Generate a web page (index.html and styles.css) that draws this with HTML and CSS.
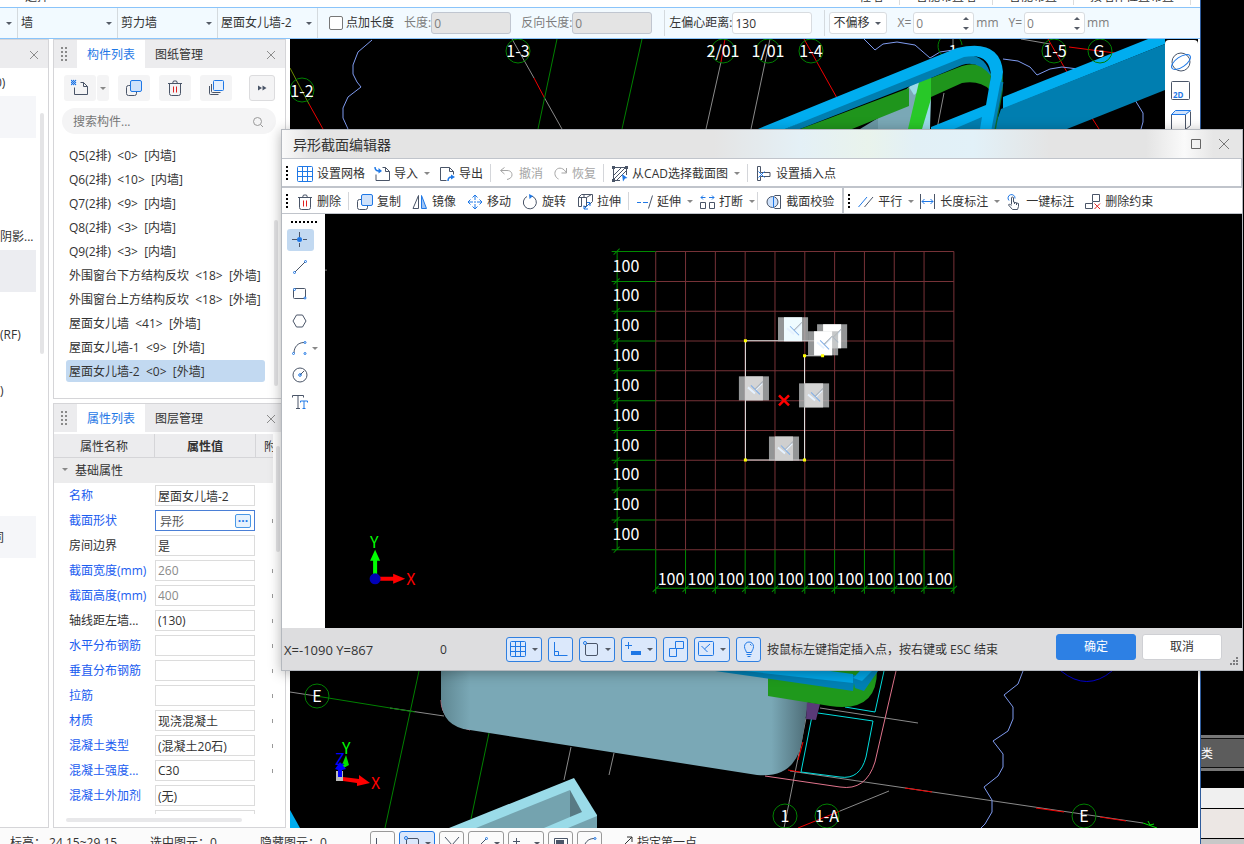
FILE: index.html
```html
<!DOCTYPE html>
<html lang="zh-CN">
<head>
<meta charset="utf-8">
<title>异形截面编辑器</title>
<meta name="viewport" content="width=device-width, initial-scale=1">
<link rel="stylesheet" href="styles.css">
</head>
<body>

<!-- icon sprite -->
<svg class="sprite" aria-hidden="true">
  <symbol id="i-close" viewBox="0 0 16 16"><path d="M4 4l8 8M12 4l-8 8" stroke="#8c8c8c"/></symbol>
  <symbol id="i-winclose" viewBox="0 0 16 16"><path d="M3 3l10 10M13 3L3 13" stroke="#777"/></symbol>
  <symbol id="i-winmax" viewBox="0 0 16 16"><path d="M3.500 3.500h9v9h-9z" stroke="#666"/></symbol>
  <symbol id="i-new" viewBox="0 0 18 18"><path d="M9.500 3.500h3l4 4v8h-13v-7M12.500 3.500v4h4" stroke="#4a5568"/><path d="M0 1h1v1h-1zM2 1h1v1h-1zM4 1h1v1h-1zM1 2h1v1h-1zM3 2h1v1h-1zM0 3h1v1h-1zM2 3h1v1h-1zM4 3h1v1h-1zM1 4h1v1h-1zM3 4h1v1h-1zM0 5h1v1h-1zM2 5h1v1h-1zM4 5h1v1h-1z" fill="#1f78e6" stroke="#1f78e6" stroke-width=".3"/></symbol>
  <symbol id="i-copy" viewBox="0 0 16 16"><path d="M4.500 5.500h-2a2 2 0 0 0-2 2v6a2 2 0 0 0 2 2h6a2 2 0 0 0 2-2v-1.500" stroke="#4a5568"/><rect x="4.500" y=".5" width="11" height="11" rx="1.500" fill="#cfe2fb" stroke="#1f78e6"/></symbol>
  <symbol id="i-trash" viewBox="0 0 16 16"><path d="M1 3.500h14M5.500 3.500l1-2.500h3l1 2.500M2.500 4v9.500a2 2 0 0 0 2 2h7a2 2 0 0 0 2-2v-9.500" stroke="#4a5568"/><path d="M6.500 6.500v6M9.500 6.500v6" stroke="#e02020"/></symbol>
  <symbol id="i-layers" viewBox="0 0 16 16"><path d="M3.500 4v7.500a1 1 0 0 0 1 1h8M1.500 6v7.500a1 1 0 0 0 1 1h8" stroke="#4a5568"/><rect x="5.500" y=".5" width="10" height="10" rx="1" fill="#e6f0fd" stroke="#1f78e6"/></symbol>
  <symbol id="i-more" viewBox="0 0 16 16"><path d="M4 5.500l4 2.500-4 2.500zM8.500 5.500l4 2.500-4 2.500z" fill="#4a5568"/></symbol>
  <symbol id="i-search" viewBox="0 0 16 16"><circle cx="7.500" cy="7.500" r="4" stroke="#999"/><path d="M10.500 10.500l2.500 2.500" stroke="#999"/></symbol>
  <symbol id="i-grid" viewBox="0 0 16 16"><rect x=".5" y=".5" width="15" height="15" rx="1" fill="none" stroke="#1f78e6"/><path d="M5.500 .5v15M10.500 .5v15M.5 5.500h15M.5 10.500h15" stroke="#1f78e6"/></symbol>
  <symbol id="i-import" viewBox="0 0 16 16"><path d="M8.500 1.500h3l4 4v9h-13.500v-6M11.500 1.500v4h4" stroke="#4a5568"/><path d="M1 1c0 3 1.500 4 4 4" stroke="#1f78e6" stroke-width="1.500"/><path d="M4.500 2l3.500 3-3.500 2.500z" fill="#1f78e6"/></symbol>
  <symbol id="i-export" viewBox="0 0 16 16"><path d="M7.500 14.500h-6v-13h9l4 4v3M10.500 1.500v4h4" stroke="#4a5568"/><path d="M9 15c0-3 1-4 3.500-4" stroke="#1f78e6" stroke-width="1.500"/><path d="M12 8.500l4 2.500-4 2.500z" fill="#1f78e6"/></symbol>
  <symbol id="i-undo" viewBox="0 0 16 16"><path d="M5.500 1.500L1.500 4.500l4 3.500M2 4.500h6c4 0 5 2.500 5 4.500s-2 4-5 4.500" stroke="#a5a5a5"/></symbol>
  <symbol id="i-redo" viewBox="0 0 16 16"><path d="M14.500 2v5h-5M14 6.500C12 2 7 1 4.500 3.500 1.500 6.500 3 11.500 6.500 13" stroke="#a5a5a5"/></symbol>
  <symbol id="i-hatch" viewBox="0 0 16 16"><path d="M1.500 13V2.500M3 1.500h10M14.500 3v6M3 14.500h5M2 9l7-7M2 13l11-11M5 14l9-9" stroke="#4a5568"/><path d="M0 0h3v3h-3zM13 0h3v3h-3zM0 13h3v3h-3z" fill="#4a5568"/><path d="M10 8l5.500 4-2.500.5-2 3z" fill="#1f78e6"/></symbol>
  <symbol id="i-insert" viewBox="0 0 16 16"><path d="M1.500 .5v14h3V10.500h9.500V6.500H4.500V.5z" stroke="#4a5568"/><path d="M2.500 5.500l6 6M8.500 5.500l-6 6" stroke="#1f78e6"/></symbol>
  <symbol id="i-mirror" viewBox="0 0 16 16"><path d="M6.500 1.500v13h-5.500z" stroke="#4a5568"/><path d="M9.500 1.500v13h5z" fill="#9ec5f7" stroke="#1f78e6"/></symbol>
  <symbol id="i-move" viewBox="0 0 16 16"><path d="M8 2v4M8 10v4M2 8h4M10 8h4M7 8h2" stroke="#1f78e6"/><path d="M5.500 3.500L8 1l2.500 2.500M5.500 12.500L8 15l2.500-2.500M3.500 5.500L1 8l2.500 2.500M12.500 5.500L15 8l-2.500 2.500" stroke="#1f78e6"/></symbol>
  <symbol id="i-rotate" viewBox="0 0 16 16"><path d="M10 2.200A6.500 6.500 0 1 1 5 2.500" stroke="#4a5568"/><path d="M7 0l4 2-3.500 3z" fill="#1f78e6"/></symbol>
  <symbol id="i-stretch" viewBox="0 0 16 16"><path d="M1.500 3.500h8v9h-3M1.500 3.500l3-3h11v7l-3 3M9.500 3.500l5-3M1.500 3.500v9h3v-9M7 1v3" stroke="#4a5568"/><path d="M7 15l6-6M7 11.500v3.500h4M13 12v-3.500h-3" stroke="#1f78e6"/></symbol>
  <symbol id="i-extend" viewBox="0 0 16 16"><path d="M0 8.500h4M6 8.500h5" stroke="#1f78e6"/><path d="M15.500 1.500l-4 13" stroke="#4a5568"/></symbol>
  <symbol id="i-break" viewBox="0 0 16 16"><path d="M1.500 8.500h5v6h-5zM10.500 8.500h5v6h-5z" stroke="#4a5568"/><path d="M2 3.500h4.500M4 1.500l-2 2 2 2M10 3.500h5M13 1.500l2 2-2 2" stroke="#1f78e6"/></symbol>
  <symbol id="i-check" viewBox="0 0 16 16"><path d="M8.500 1.500h6v13h-6" stroke="#4a5568"/><circle cx="6.500" cy="8" r="5.500" stroke="#4a5568" fill="#cfe2fb"/><path d="M7.500 2.500v11" stroke="#1f78e6"/></symbol>
  <symbol id="i-parallel" viewBox="0 0 16 16"><path d="M.5 13L9 3" stroke="#1f78e6"/><path d="M6.500 13L15 3" stroke="#4a5568"/></symbol>
  <symbol id="i-length" viewBox="0 0 16 16"><path d="M.5 0v15M14.500 0v15" stroke="#4a5568"/><path d="M2 7.500h11M4.500 5L2 7.500 4.500 10M10.500 5L13 7.500 10.500 10" stroke="#1f78e6"/></symbol>
  <symbol id="i-touch" viewBox="0 0 16 16"><path d="M3 6.500a3.500 3.500 0 1 1 6-2" stroke="#1f78e6"/><path d="M5.500 10.500V4a1 1 0 0 1 2 0v4l5 1.500v3l-1 3h-5l-4-4.500c0-1 1.500-1 3 .5M8.500 8v2M10.500 9v2" stroke="#4a5568"/></symbol>
  <symbol id="i-unlink" viewBox="0 0 16 16"><path d="M7.500 .5h7v7h-7zM7 9.500h-6.500v5h7V8" stroke="#4a5568"/><path d="M9.500 9.500l5.500 5.500M15 9.500L9.500 15" stroke="#e02020"/></symbol>
  <symbol id="i-point" viewBox="0 0 16 16"><path d="M7.500 0v5M7.500 11v4M0 7.500h5M11 7.500h4" stroke="#4a5568"/><circle cx="7.500" cy="7.500" r="2.500" fill="#1f78e6"/></symbol>
  <symbol id="i-line" viewBox="0 0 16 16"><path d="M3 13L13 3" stroke="#4a5568"/><circle cx="2.500" cy="13.500" r="1" stroke="#1f78e6"/><circle cx="13.500" cy="2.500" r="1" stroke="#1f78e6"/></symbol>
  <symbol id="i-rect" viewBox="0 0 16 16"><rect x="1.500" y="2.500" width="12" height="10" rx="1" stroke="#4a5568"/><circle cx="2.500" cy="3.500" r="1" stroke="#1f78e6" fill="#fff"/><circle cx="13" cy="12" r="1" stroke="#1f78e6" fill="#fff"/></symbol>
  <symbol id="i-hex" viewBox="0 0 16 16"><path d="M4.500 2h6l3.500 6-3.500 6h-6L1 8z" stroke="#4a5568"/></symbol>
  <symbol id="i-arc" viewBox="0 0 16 16"><path d="M2 13C2 7 6 2.500 12 2.500" stroke="#4a5568"/><circle cx="1.500" cy="13.500" r="1" stroke="#1f78e6"/><circle cx="13" cy="2.500" r="1" stroke="#1f78e6"/><circle cx="13" cy="13.500" r="1" stroke="#1f78e6"/></symbol>
  <symbol id="i-circle" viewBox="0 0 16 16"><circle cx="8" cy="8" r="7" stroke="#4a5568"/><path d="M8 8l4-4" stroke="#4a5568"/><circle cx="8" cy="8" r="1.300" stroke="#1f78e6"/></symbol>
  <symbol id="i-type" viewBox="0 0 16 16"><path d="M.5 3.500v-2h11v2M6 1.500v13M4 14.500h4" stroke="#4a5568"/><path d="M8.500 8.500v-1.500h7v1.500M12 7v7.500M10.500 14.500h3" stroke="#1f78e6"/></symbol>
  <symbol id="i-ortho" viewBox="0 0 16 16"><path d="M1.500 1v13.500h13M1.500 10.500h4v4" stroke="#1f78e6"/></symbol>
  <symbol id="i-ortho-off" viewBox="0 0 16 16"><path d="M1.500 2v12.500h13M1.500 10.500h4v4" stroke="#4a5568"/></symbol>
  <symbol id="i-snap" viewBox="0 0 16 16"><rect x="2.500" y="2.500" width="12" height="12" rx="1.500" stroke="#4a5568"/><circle cx="2" cy="2" r="1.500" stroke="#1f78e6" fill="#e0ebfc"/></symbol>
  <symbol id="i-dyn" viewBox="0 0 16 16"><path d="M3.500 1v7M0 4.500h7" stroke="#1f78e6"/><path d="M6 10h10v4h-10z" fill="#1f78e6"/></symbol>
  <symbol id="i-dyn-off" viewBox="0 0 16 16"><path d="M3.500 2v7M0 5.500h7" stroke="#4a5568"/><path d="M6 11h10v4h-10z" fill="#4a5568"/></symbol>
  <symbol id="i-link" viewBox="0 0 16 16"><path d="M7.500 .5h8v7h-8zM7.500 7.500h-6v8h7v-8" stroke="#1f78e6"/></symbol>
  <symbol id="i-constraint" viewBox="0 0 16 16"><rect x=".5" y=".5" width="15" height="14" rx="1" stroke="#1f78e6"/><path d="M3.500 5l6 6M6.500 8L12 3" stroke="#1f78e6"/></symbol>
  <symbol id="i-bulb" viewBox="0 0 16 16"><path d="M5.500 11.500C5 9 3.500 8.500 3.500 5.500a4.500 4.500 0 0 1 9 0C12.500 8.500 11 9 10.500 11.500zM5.500 13.500h5M6.500 15.500h3M9 3l1.500 1.500" stroke="#1f78e6"/></symbol>
  <symbol id="i-cross" viewBox="0 0 16 16"><path d="M1 1l7 8 7-8" stroke="#4a5568"/><path d="M8 9l-5 6M8 9l5 6" stroke="#1f78e6"/></symbol>
  <symbol id="i-fill" viewBox="0 0 16 16"><path d="M1.500 2.500h13v11h-13z" stroke="#4a5568"/><path d="M3 4h8v9h-8z" fill="#4a5568"/></symbol>
  <symbol id="i-arrowout" viewBox="0 0 16 16"><path d="M6 10l8-8M9 2h5v5M0 14h2" stroke="#333"/></symbol>
  <symbol id="i-orbit" viewBox="0 0 22 22"><circle cx="11" cy="11" r="9" stroke="#4a5568"/><ellipse cx="11" cy="11" rx="11" ry="5" transform="rotate(-35 11 11)" stroke="#1f78e6"/></symbol>
  <symbol id="i-2d" viewBox="0 0 22 22"><rect x="1.500" y="1.500" width="18" height="18" rx="1" stroke="#4a5568"/></symbol>
  <symbol id="i-cube" viewBox="0 0 22 22"><path d="M1.500 5.500h14v15h-14zM15.500 20.500l5-4v-14" stroke="#4a5568"/><path d="M1.500 5.500l4-4h15l-5 4z" fill="#cfe2fb" stroke="#1f78e6"/></symbol>
</svg>

<div class="screen">
  <div class="app">
    <div class="ribbon">
      <span class="ribbon-label first">选择</span>
      <span class="ribbon-label">柱墙</span>
      <span class="ribbon-label">智能布置墙</span>
      <span class="ribbon-label">智能布置</span>
      <span class="ribbon-label">按墙体位置布置</span>
    </div>

    <form class="optionbar">
      <span class="combo floor"><select aria-label="楼层"><option></option></select></span>
      <span class="combo"><select aria-label="构件大类"><option>墙</option></select></span>
      <span class="combo"><select aria-label="构件类型"><option>剪力墙</option></select></span>
      <span class="combo"><select aria-label="构件"><option>屋面女儿墙-2</option></select></span>
      <label class="tick"><input type="checkbox">点加长度</label>
      <label class="field off">长度:<input type="text" value="0" disabled></label>
      <label class="field off">反向长度:<input type="text" value="0" disabled></label>
      <label class="field ruled">左偏心距离:<input type="text" value="130"></label>
      <span class="offset ruled"><span class="combo boxed"><select aria-label="偏移方式"><option>不偏移</option></select></span></span>
      <label class="field off axis">X=<span class="spin"><input type="text" value="0"></span>mm</label>
      <label class="field off axis">Y=<span class="spin"><input type="text" value="0"></span>mm</label>
    </form>

    <div class="workspace">
      <aside class="modules">
        <div class="dock-head"><button class="close" aria-label="关闭"><svg><use href="#i-close"/></svg></button></div>
        <ul>
          <li>0)</li>
          <li class="tint"></li>
          <li class="blank"></li>
          <li>阴影...</li>
          <li class="current"></li>
          <li></li>
          <li>(RF)</li>
          <li></li>
          <li>)</li>
          <li class="blank tall"></li>
          <li class="tint">同</li>
        </ul>
        <i class="bar modules-bar"></i>
      </aside>

      <div class="docks">
        <section class="dock components">
          <div class="dock-head">
            <i class="dots"></i>
            <button class="tab on">构件列表</button>
            <button class="tab">图纸管理</button>
            <button class="close" aria-label="关闭"><svg><use href="#i-close"/></svg></button>
          </div>
          <div class="dock-tools">
            <span class="pair"><button aria-label="新建"><svg class="i18"><use href="#i-new"/></svg></button><button class="drop" aria-label="新建选项"></button></span>
            <button aria-label="复制"><svg><use href="#i-copy"/></svg></button>
            <button aria-label="删除"><svg><use href="#i-trash"/></svg></button>
            <button aria-label="层间复制"><svg><use href="#i-layers"/></svg></button>
            <button class="more" aria-label="更多"><svg><use href="#i-more"/></svg></button>
          </div>
          <label class="search"><input type="text" placeholder="搜索构件..." aria-label="搜索构件"><svg><use href="#i-search"/></svg></label>
          <ul class="component-list">
            <li>Q5(2排)  &lt;0&gt;  [内墙]</li>
            <li>Q6(2排)  &lt;10&gt;  [内墙]</li>
            <li>Q7(2排)  &lt;9&gt;  [内墙]</li>
            <li>Q8(2排)  &lt;3&gt;  [内墙]</li>
            <li>Q9(2排)  &lt;3&gt;  [内墙]</li>
            <li>外围窗台下方结构反坎  &lt;18&gt;  [外墙]</li>
            <li>外围窗台上方结构反坎  &lt;18&gt;  [外墙]</li>
            <li>屋面女儿墙  &lt;41&gt;  [外墙]</li>
            <li>屋面女儿墙-1  &lt;9&gt;  [外墙]</li>
            <li class="selected">屋面女儿墙-2  &lt;0&gt;  [外墙]</li>
          </ul>
          <i class="bar list-bar"></i>
        </section>

        <section class="dock properties">
          <div class="dock-head">
            <i class="dots"></i>
            <button class="tab on">属性列表</button>
            <button class="tab">图层管理</button>
            <button class="close" aria-label="关闭"><svg><use href="#i-close"/></svg></button>
          </div>
          <div class="table-clip">
            <table>
              <thead>
                <tr><th>属性名称</th><th class="strong">属性值</th><th class="extra">附</th></tr>
              </thead>
              <tbody>
                <tr class="group"><td colspan="3">基础属性</td></tr>
                <tr class="key"><td><label for="p1">名称</label></td><td><input id="p1" type="text" value="屋面女儿墙-2"></td><td></td></tr>
                <tr class="key"><td><label for="p2">截面形状</label></td><td><span class="editing"><input id="p2" type="text" value="异形"><button aria-label="编辑截面">···</button></span></td><td class="opt"></td></tr>
                <tr><td><label for="p3">房间边界</label></td><td><input id="p3" type="text" value="是"></td><td></td></tr>
                <tr class="key"><td><label for="p4">截面宽度(mm)</label></td><td><input id="p4" type="text" value="260" disabled></td><td class="opt"></td></tr>
                <tr class="key"><td><label for="p5">截面高度(mm)</label></td><td><input id="p5" type="text" value="400" disabled></td><td class="opt"></td></tr>
                <tr><td><label for="p6">轴线距左墙...</label></td><td><input id="p6" type="text" value="(130)"></td><td class="opt"></td></tr>
                <tr class="key"><td><label for="p7">水平分布钢筋</label></td><td><input id="p7" type="text"></td><td class="opt"></td></tr>
                <tr class="key"><td><label for="p8">垂直分布钢筋</label></td><td><input id="p8" type="text"></td><td class="opt"></td></tr>
                <tr class="key"><td><label for="p9">拉筋</label></td><td><input id="p9" type="text"></td><td class="opt"></td></tr>
                <tr class="key"><td><label for="p10">材质</label></td><td><input id="p10" type="text" value="现浇混凝土"></td><td class="opt"></td></tr>
                <tr class="key"><td><label for="p11">混凝土类型</label></td><td><input id="p11" type="text" value="(混凝土20石)"></td><td class="opt"></td></tr>
                <tr class="key"><td><label for="p12">混凝土强度...</label></td><td><input id="p12" type="text" value="C30"></td><td class="opt"></td></tr>
                <tr class="key"><td><label for="p13">混凝土外加剂</label></td><td><input id="p13" type="text" value="(无)"></td><td></td></tr>
                <tr><td></td><td><input type="text" aria-label="泵送类型"></td><td></td></tr>
              </tbody>
            </table>
          </div>
          <i class="bar table-bar"></i>
          <div class="hscroll"><i></i></div>
        </section>
      </div>

      <main class="model">
        <svg class="scene" viewBox="290 39 908 789" preserveAspectRatio="xMinYMin slice">
          <g fill="none" stroke="#8a8a8a">
            <path d="M512 39L534 78M544 97L562 129M721 62L706 129M770 39L751 129M944 93L937 129M1021 39L1050 44M953 39v6"/>
            <path d="M290 692L316 696M390 708L444 716M571 747L564 780M614 753L609 775M820 708L918 723M806 718L784 828M790 771L1143 823M889 791L840 811"/>
          </g>
          <g fill="none" stroke="#008000">
            <path d="M290 68L309 104" stroke="#6c8a00"/>
            <path d="M557 39L538 129M642 39L622 129M316 696L415 712M419 671L385 828M489 733L471 819"/>
          </g>
          <path d="M309 104L323 129M534 78L544 97M725 39L721 62M804 39L837 98M1069 47L1115 53M1048 39L1067 72M1092 118L1099 129M803 742L798 760M905 788L932 792M1036 808L1064 812M1100 817L1126 821M840 811L798 828M788 770L800 772" fill="none" stroke="#f00000"/>
          <path d="M372 40L358 52 353 65 353 74 357 82 361 87 348 97 343 108 343 118 348 129M864 39L875 50 883 44 897 42 915 45 930 58 940 52 953 50M1003 59L1018 61 1030 67 1037 75 1050 69 1062 67 1078 69M1135 100L1143 113 1143 122 1141 129M1023 671L1018 684 1004 695 1013 707 1013 719 1008 731 993 741 1003 754 1003 767 998 776 984 787 992 800 992 812 985 824 981 828" fill="none" stroke="#7f9bf0"/>
          <path d="M1061 671Q1087 692 1112 671" fill="none" stroke="#0000d0"/>
          <path d="M942 55a12 12 0 1 1 20-10" fill="none" stroke="#008000"/>
          <text class="cad-text" text-anchor="middle" x="953" y="57">1</text>

          <!-- parapet above the dialog -->
          <path d="M878 117L912 84 919 82 921 100 912 129H878z" fill="#7aa8b6"/>
          <path d="M860 129L878 118V129z" fill="#6a97a4"/>
          <path d="M909 87l10-5v9l-5 4z" fill="#9adbe8"/>
          <path d="M830 118L909 88V106L852 129H800z" fill="#1f951c"/>
          <path d="M928 90L931 96 930 129H919z" fill="#9adbe8"/>
          <path d="M919 82l12-5v22l-9 30h-14z" fill="#28c828"/>
          <path d="M931 78L962 66Q980 60 991 74L990 90Q980 80 962 83L931 97z" fill="#1f951c"/>
          <path d="M780 131L824 112 962 56Q985 52 991 76 978 60 962 65L931 78 800 129z" fill="#007eb0"/>
          <path d="M1003 97L1148 39H1165V44L1003 109z" fill="#00adef"/>
          <path d="M1001 109L1165 44V90L1067 129H994z" fill="#007eb0"/>
          <path d="M1003 72V90L996 129H992z" fill="#0f6a2a"/>
          <path d="M949 129L986 113 982 129z" fill="#007eb0"/>
          <path d="M758 129L824 102 957 48Q1000 38 1003 72L994 129H980L982 117 954 129H931V127L986 105 991 76Q990 52 964 57L785 129z" fill="#00adef"/>
          <path d="M1002 82L993 129" stroke="#007eb0" stroke-width="3"/>

          <!-- slab and parapet under the dialog -->
          <defs>
            <linearGradient id="slab"><stop offset="0" stop-color="#5f8792"/><stop offset=".08" stop-color="#7aa8b6"/><stop offset=".9" stop-color="#7aa8b6"/><stop offset="1" stop-color="#4d6c76"/></linearGradient>
          </defs>
          <path d="M884 671L875 712 845 707M818 713L873 721 866 757Q860 780 840 777L801 772 812 716" fill="none" stroke="#00dede"/>
          <path d="M896 671L875 762Q866 791 840 787L765 776M441 700Q441 722 470 730" fill="none" stroke="#e0748c"/>
          <path d="M441 671V700Q442 727 470 730L757 775Q798 779 803 735L808 703V671z" fill="url(#slab)"/>
          <path d="M807 702l13 2-4 16-10-1z" fill="#5a3a78"/>
          <path d="M730 671L768 677V696L830 706Q877 713 877 671z" fill="#1f991c"/>
          <path d="M715 671L853 691 855 675 820 671z" fill="#0080b4"/>
          <path d="M745 671L853 683V674L830 671z" fill="#00a4e4"/>
          <path d="M853 679L860 671H878L864 691 855 688z" fill="#0080b4"/>
          <path d="M853 678L860 671H872L862 681z" fill="#00a4e4"/>

          <path d="M449 828L574 778 597 815V828z" fill="#9adbe8"/>
          <path d="M476 828L570 790V817L544 828z" fill="#74a3af"/>
          <path d="M570 790L582 812 570 817z" fill="#587a84"/>
          <path d="M597 816V828H568z" fill="#74a3af"/>
          <path d="M290 810L300 828H290z" fill="#00adef"/>

          <!-- axis bubbles -->
          <g fill="none" stroke="#008000">
            <circle cx="302" cy="90" r="12"/><circle cx="518" cy="51" r="12"/><circle cx="723" cy="51" r="12"/><circle cx="768" cy="51" r="12"/><circle cx="811" cy="51" r="12"/><circle cx="1054" cy="51" r="12"/><circle cx="1100" cy="51" r="12"/>
            <circle cx="317" cy="696" r="12"/><circle cx="785" cy="816" r="12"/><circle cx="827" cy="816" r="12"/><circle cx="1084" cy="816" r="12"/>
          </g>
          <g class="cad-text" text-anchor="middle">
            <text x="302" y="97">1-2</text><text x="518" y="57">1-3</text><text x="723" y="57">2/01</text><text x="768" y="57">1/01</text><text x="811" y="57">1-4</text><text x="1055" y="57">1-5</text><text x="1099" y="57">G</text>
            <text x="317" y="702">E</text><text x="785" y="822">1</text><text x="827" y="822">1-A</text><text x="1084" y="822">E</text>
          </g>
          <path d="M1143 823l14 5M1148 821l2 4 4-1" stroke="#00e000" fill="none"/>

          <!-- world axes -->
          <path d="M336 771h7v10h-7z" fill="#bbb"/>
          <path d="M343 777L359 779V775L370 783 357 786V783L343 781z" fill="#f00"/>
          <path d="M340 770L346 755 349 765z" fill="#00e000"/>
          <path d="M338 777V770L335 769 340 762 346 769 342 770V777z" fill="#00f"/>
          <g class="axis-text"><text x="342" y="754" fill="#0f0">Y</text><text x="335" y="765" fill="#00f">Z</text><text x="371" y="789" fill="#f00">X</text></g>
        </svg>
        <nav class="viewtools">
          <button aria-label="动态观察"><svg><use href="#i-orbit"/></svg></button>
          <button class="two-d" aria-label="二维"><svg><use href="#i-2d"/></svg><b>2D</b></button>
          <button aria-label="三维"><svg><use href="#i-cube"/></svg></button>
        </nav>
      </main>
    </div>

    <footer class="appstatus">
      <span class="level">标高： 24.15~29.15</span>
      <span class="picked">选中图元：0</span>
      <span class="hidden-count">隐藏图元：0</span>
      <div class="status-tools">
        <button aria-label="正交"><svg><use href="#i-ortho-off"/></svg></button>
        <button class="wide on" aria-label="捕捉"><svg><use href="#i-snap"/></svg></button>
        <button aria-label="交点"><svg><use href="#i-cross"/></svg></button>
        <button class="wide" aria-label="约束"><svg><use href="#i-line"/></svg></button>
        <button class="wide" aria-label="动态输入"><svg><use href="#i-dyn-off"/></svg></button>
        <button aria-label="填充"><svg><use href="#i-fill"/></svg></button>
        <button aria-label="弧线"><svg><use href="#i-arc"/></svg></button>
      </div>
      <span class="prompt"><svg><use href="#i-arrowout"/></svg>指定第一点</span>
    </footer>
  </div>

  <div class="behind">
    <div class="behind-head">类</div>
    <div class="behind-row"></div>
    <div class="behind-row warm"></div>
    <div class="behind-row last"></div>
  </div>
</div>

<div class="dialog" role="dialog" aria-labelledby="dialog-title">
  <header class="titlebar">
    <h1 id="dialog-title">异形截面编辑器</h1>
    <button aria-label="最大化"><svg><use href="#i-winmax"/></svg></button>
    <button aria-label="关闭"><svg><use href="#i-winclose"/></svg></button>
  </header>

  <div class="toolbar file">
    <i class="handle"></i>
    <button><svg><use href="#i-grid"/></svg>设置网格</button>
    <button class="split"><svg><use href="#i-import"/></svg>导入</button>
    <button><svg><use href="#i-export"/></svg>导出</button>
    <i class="sep"></i>
    <button disabled><svg><use href="#i-undo"/></svg>撤消</button>
    <button disabled><svg><use href="#i-redo"/></svg>恢复</button>
    <i class="sep"></i>
    <button class="split"><svg><use href="#i-hatch"/></svg>从CAD选择截面图</button>
    <i class="sep"></i>
    <button><svg><use href="#i-insert"/></svg>设置插入点</button>
  </div>

  <div class="toolbar edit">
    <i class="handle"></i>
    <button><svg><use href="#i-trash"/></svg>删除</button>
    <i class="sep"></i>
    <button><svg><use href="#i-copy"/></svg>复制</button>
    <button><svg><use href="#i-mirror"/></svg>镜像</button>
    <button><svg><use href="#i-move"/></svg>移动</button>
    <button><svg><use href="#i-rotate"/></svg>旋转</button>
    <button><svg><use href="#i-stretch"/></svg>拉伸</button>
    <i class="sep"></i>
    <button class="split"><svg><use href="#i-extend"/></svg>延伸</button>
    <button class="split"><svg><use href="#i-break"/></svg>打断</button>
    <i class="sep"></i>
    <button><svg><use href="#i-check"/></svg>截面校验</button>
    <i class="sep thick"></i>
    <i class="handle"></i>
    <button class="split"><svg><use href="#i-parallel"/></svg>平行</button>
    <button class="split"><svg><use href="#i-length"/></svg>长度标注</button>
    <button><svg><use href="#i-touch"/></svg>一键标注</button>
    <button><svg><use href="#i-unlink"/></svg>删除约束</button>
  </div>

  <div class="editor">
    <div class="drawtools">
      <i class="handle flat"></i>
      <button class="on" aria-label="点"><svg><use href="#i-point"/></svg></button>
      <button aria-label="直线"><svg><use href="#i-line"/></svg></button>
      <button aria-label="矩形"><svg><use href="#i-rect"/></svg></button>
      <button aria-label="多边形"><svg><use href="#i-hex"/></svg></button>
      <button class="has-drop" aria-label="弧"><svg><use href="#i-arc"/></svg></button>
      <button aria-label="圆"><svg><use href="#i-circle"/></svg></button>
      <button aria-label="文字"><svg><use href="#i-type"/></svg></button>
    </div>
    <svg class="section-canvas" viewBox="326 214 915 414" preserveAspectRatio="xMinYMin slice">
      <g id="grid" stroke="#763237"></g>
      <g id="dims" stroke="#008a00"></g>
      <g id="dimText" class="cad-text"></g>
      <path d="M745.500 340.500V459.500H804.500V355.500H823M745.500 340.500H814" fill="none" stroke="#e4e4e4"/>
      <g id="badges"></g>
      <path d="M744 339h3v3h-3zM744 458h3v3h-3zM803 458h3v3h-3zM803 354h3v3h-3zM821 354h3v3h-3z" fill="#ff0"/>
      <path d="M779 395l10 10M789 395l-10 10" stroke="#f00" stroke-width="2.500"/>
      <!-- ucs -->
      <path d="M374 574V560H371L376 549 381 560H378V574z" fill="#0f0"/>
      <path d="M380 576H394V573L406 578 394 583V580H380z" fill="#f00"/>
      <circle cx="376" cy="578" r="5.500" fill="#0000b8"/>
      <g class="axis-text"><text x="371" y="547" fill="#0f0">Y</text><text x="407" y="584" fill="#f00">X</text></g>
      <path d="M326 270h2" stroke="#777"/>
    </svg>
  </div>

  <footer class="dialog-foot">
    <span class="coords">X=-1090 Y=867</span>
    <span class="count">0</span>
    <div class="toggles">
      <button class="wide" aria-label="栅格"><svg><use href="#i-grid"/></svg></button>
      <button aria-label="正交"><svg><use href="#i-ortho"/></svg></button>
      <button class="wide" aria-label="捕捉"><svg><use href="#i-snap"/></svg></button>
      <button class="wide" aria-label="动态输入"><svg><use href="#i-dyn"/></svg></button>
      <button aria-label="关联"><svg><use href="#i-link"/></svg></button>
      <button class="wide" aria-label="约束"><svg><use href="#i-constraint"/></svg></button>
      <button aria-label="提示"><svg><use href="#i-bulb"/></svg></button>
    </div>
    <span class="hint">按鼠标左键指定插入点，按右键或 ESC 结束</span>
    <div class="actions">
      <button class="primary">确定</button>
      <button>取消</button>
    </div>
    <svg class="resizer" viewBox="0 0 9 9"><path d="M6 0h2v2h-2zM6 3h2v2h-2zM3 3h2v2h-2zM6 6h2v2h-2zM3 6h2v2h-2zM0 6h2v2h-2z" fill="#7d7d80"/></svg>
  </footer>
</div>

<script src="grid.js"></script>
</body>
</html>
```
FILE: grid.js
```js
// section grid: 10 x 10 cells of 100 mm
var LEFT = 656, TOP = 251.5, STEP = 29.75, CELLS = 10;
var END_X = LEFT + STEP * CELLS;
var END_Y = TOP + STEP * CELLS;

var grid = '', dims = '', texts = '';

for (var i = 0; i <= CELLS; i++) {
  var x = LEFT + STEP * i;
  var y = TOP + STEP * i;

  grid += '<path d="M' + x + ' ' + TOP + 'V' + END_Y + 'M' + LEFT + ' ' + y + 'H' + END_X + '"/>';

  // extension lines and tick marks
  dims += '<path d="M' + x + ' ' + END_Y + 'V593M' + (x - 3) + ' 591l6 -6"/>';
  dims += '<path d="M612 ' + y + 'H' + LEFT + 'M614 ' + (y + 3) + 'l6 -6"/>';

  if (i < CELLS) {
    texts += '<text x="613" y="' + (y + 20) + '">100</text>';
    texts += '<text x="' + (x + 2) + '" y="584">100</text>';
  }
}
dims += '<path d="M617.5 ' + TOP + 'V' + END_Y + 'M' + LEFT + ' 587.5H' + END_X + '"/>';

document.getElementById('grid').innerHTML = grid;
document.getElementById('dims').innerHTML = dims;
document.getElementById('dimText').innerHTML = texts;

// constraint badges: x, y, brightness
var badges = [
  [778, 317, '#effbff'], [817, 324, '#fff'], [808, 331, '#fff'],
  [739, 376, '#d4d4d4'], [799, 383, '#d4d4d4'], [769, 436, '#cfcfcf']
];
document.getElementById('badges').innerHTML = badges.map(function (b) {
  return '<g transform="translate(' + b[0] + ' ' + b[1] + ')" fill="none">' +
    '<rect width="30" height="24" fill="#b8babc" fill-opacity=".8"/><rect x="6" width="18" height="24" fill="' + b[2] + '"/>' +
    '<path d="M9 11l7 6M16 14l7-7" stroke="#e6f2ff" stroke-width="2"/>' +
    '<path d="M12 9l9 9" stroke="#7faee8"/><path d="M16 13l8-8" stroke="#a4acb4"/></g>';
}).join('');
```
FILE: styles.css
```css
* { box-sizing: border-box; }
body { margin: 0; height: 100vh; overflow: hidden; background: #000; color: #333; font: 12px/16px "Open Sans", "Noto Sans CJK SC", sans-serif; }
button, input, select { font: inherit; color: inherit; margin: 0; padding: 0; border: 0; background: none; border-radius: 0; }
button { display: flex; align-items: center; justify-content: center; flex: none; white-space: nowrap; }
ul { list-style: none; margin: 0; padding: 0; }
svg { width: 16px; height: 16px; flex: none; fill: none; }
.sprite { position: absolute; width: 0; height: 0; }

.screen { display: flex; height: 100vh; }
.app { flex: 1; min-width: 0; display: flex; flex-direction: column; background: #fff; border-right: 1px solid #2f5c9c; }

/* ribbon + option bar */
.ribbon { height: 7px; flex: none; overflow: hidden; display: flex; align-items: flex-end; padding: 0 9px 2px; }
.ribbon-label { flex: none; line-height: 16px; padding: 0 16px; border-right: 1px solid #dcdcdc; }
.ribbon-label.first { margin-right: auto; border: 0; }
.optionbar { height: 32px; flex: none; display: flex; align-items: center; background: #f2faff; border: solid #8ac4fa; border-width: 1px 0; white-space: nowrap; }
.combo { position: relative; width: 100px; height: 30px; border-right: 1px solid #d4dade; }
.combo.floor { width: 18px; }
.combo select { appearance: none; width: 100%; height: 100%; padding: 0 16px 0 3px; outline: 0; }
.combo.floor select { padding: 0; }
.combo::after, .split::after, .drop::after, .has-drop::after, .wide::after { content: ""; border: 3px solid transparent; border-top-color: #555b66; border-bottom: 0; }
.combo::after { position: absolute; right: 5px; top: 14px; pointer-events: none; }
.tick { display: flex; align-items: center; gap: 3px; margin-left: 11px; }
.tick input { appearance: none; width: 14px; height: 14px; border: 1px solid #777; border-radius: 2px; background: #fff; }
.field { display: flex; align-items: center; margin-left: 10px; }
.field input { width: 80px; height: 22px; padding: 0 2px; background: #fff; border: 1px solid #d8dce0; border-radius: 3px; }
.field.off { color: #7d7d7d; }
.field input:disabled { background: #e4e4e4; border-color: #c0c6d0; }
.ruled { border-left: 1px solid #d4dade; padding-left: 4px; height: 26px; }
.field.ruled, .offset { margin-left: 12px; }
.offset { display: flex; align-items: center; }
.combo.boxed { width: 58px; height: 22px; border: 1px solid #d8dce0; border-radius: 3px; background: #fff; }
.combo.boxed select { padding: 0 3px; }
.combo.boxed::after { top: 9px; }
.field.axis { gap: 2px; }
.spin { position: relative; }
.spin input { width: 61px; display: block; }
.spin::before, .spin::after { content: ""; position: absolute; right: 5px; border: 3px solid transparent; }
.spin::before { top: 5px; border-bottom-color: #555b66; border-top: 0; }
.spin::after { bottom: 4px; border-top-color: #555b66; border-bottom: 0; }

/* docked panels */
.workspace { flex: 1; min-height: 0; display: flex; gap: 4px; }
.bar { position: absolute; width: 4px; border-radius: 2px; background: #e4e4e6; }
.dock-head { height: 29px; display: flex; background: #ececee; border-top: 1px solid #d5d5d8; flex: none; }
.close { width: 28px; margin-left: auto; padding-top: 2px; }
.modules { position: relative; width: 49px; border: solid #d5d5d8; border-width: 0 1px 1px 0; flex: none; }
.modules li { height: 28px; width: 36px; line-height: 30px; white-space: nowrap; overflow: hidden; }
.modules li:first-child { text-indent: -5px; }
.modules li.tint { height: 42px; line-height: 44px; background: #f5f6f9; text-indent: -8px; }
.modules li.current { height: 42px; background: #ecedf1; }
.modules li.blank { height: 84px; }
.modules li.blank.tall { height: 112px; }
.modules-bar { left: 40px; top: 74px; height: 241px; }

.docks { width: 233px; flex: none; display: flex; flex-direction: column; gap: 4px; }
.dock { position: relative; border: solid #d5d5d8; border-width: 0 1px 1px; display: flex; flex-direction: column; }
.components { height: 360px; flex: none; }
.properties { flex: 1; min-height: 0; }
.dots { width: 8px; height: 15px; margin: 7px 8px 0 7px; background: linear-gradient(#ececee, #ececee) 2px 0 / 2px 100% no-repeat, repeating-linear-gradient(#8a8a8a 0 2px, #ececee 2px 4px) 0 0 / 6px 100% no-repeat; }
.tab { width: 68px; padding-top: 2px; }
.tab.on { background: #fff; color: #1f78e6; }
.dock-tools { display: flex; gap: 9px; padding: 7px 10px; }
.dock-tools button { width: 32px; height: 26px; background: #f4f4f5; border-radius: 3px; }
.pair { display: flex; gap: 1px; }
.dock-tools .drop { width: 12px; }
.drop::after { border-top-color: #888; }
.dock-tools .more { width: 26px; margin-left: 8px; border: 1px solid #dcdcde; }
.dock-tools .i18 { width: 18px; height: 18px; }
.search { display: flex; align-items: center; height: 26px; margin: 0 9px 10px 8px; padding: 2px 10px 0 11px; border-radius: 13px; background: #f4f4f5; }
.search input { flex: 1; min-width: 0; outline: 0; }
.search input::placeholder { color: #777; opacity: 1; }
.component-list { padding: 0 20px 0 12px; }
.component-list li { height: 22px; margin-bottom: 2px; padding-left: 3px; line-height: 24px; border-radius: 3px; white-space: pre; }
.component-list .selected { background: #c2d9f1; }
.list-bar { right: 7px; top: 181px; height: 166px; }

.table-clip { margin-top: 2px; flex: 1; min-height: 0; overflow: hidden; width: 219px; }
table { border-collapse: separate; border-spacing: 0; table-layout: fixed; width: 219px; }
td, th { padding: 0; height: 25px; font-weight: normal; white-space: nowrap; overflow: hidden; }
th { height: 24px; padding-top: 2px; background: #ececee; border: solid #d5d5d8; border-width: 0 1px 1px 0; }
th:nth-child(1), th:nth-child(2) { width: 101px; }
th.strong { font-weight: bold; }
th.extra { border-right: 0; text-align: left; padding-left: 8px; text-overflow: clip; }
.group td { background: #ececed; position: relative; }
.group td:first-child { padding-left: 21px; }
.group td::before { content: ""; position: absolute; left: 8px; top: 10px; border: 3px solid transparent; border-top-color: #888; border-bottom: 0; }
td:first-child { padding-left: 15px; }
.key label { color: #1a5cf0; }
td input { display: block; width: 100px; height: 21px; padding: 0 2px; border: 1px solid #dcdcdc; background: #fff; }
td input:disabled { color: #8a8a8a; }
.editing { display: flex; align-items: center; width: 100px; height: 21px; border: 1px solid #4a7fd6; }
.editing input { flex: 1; min-width: 0; height: 19px; border: 0; padding-left: 4px; color: #555; }
.editing button { width: 16px; height: 14px; margin-right: 3px; border: 1px solid #4a98e6; border-radius: 2px; background: #e6f2fd; color: #1f78e6; font-weight: bold; overflow: hidden; }
.opt { text-align: right; }
.opt::after { content: ""; display: inline-block; width: 1px; height: 4px; background: #999; vertical-align: middle; }
.table-bar { right: 5px; top: 43px; height: 106px; }
.hscroll { height: 13px; padding: 4px 0 0 12px; flex: none; }
.hscroll i { display: block; width: 176px; height: 4px; border-radius: 2px; background: #e8e8ea; }

/* 3d model view */
.model { position: relative; flex: 1; min-width: 0; background: #000; margin-right: 2px; }
.scene { display: block; width: 100%; height: 100%; }
.cad-text { font: 16px "Noto Sans CJK SC", sans-serif; fill: #fff; }
.axis-text { font: 16px "Noto Sans CJK SC", sans-serif; }
.viewtools { position: absolute; right: 0; top: 1px; width: 33px; padding: 11px 5px; display: flex; flex-direction: column; gap: 7px; background: #fff; border-radius: 4px; }
.viewtools button { position: relative; width: 22px; height: 22px; }
.viewtools svg { width: 22px; height: 22px; }
.two-d b { position: absolute; left: 3px; bottom: 2px; font-size: 8px; line-height: 10px; color: #1f78e6; }

.appstatus { height: 16px; flex: none; display: flex; overflow: hidden; background: #fbfbfb; padding-left: 10px; }
.appstatus > span { margin-top: 7px; flex: none; }
.level { width: 140px; }
.picked, .hidden-count { width: 110px; }
.status-tools { display: flex; gap: 4px; margin-top: 3px; }
.status-tools button { width: 25px; height: 25px; border: 1px solid #999; border-radius: 3px; }
.status-tools .wide { width: 36px; gap: 5px; }
.status-tools .on { background: #dbe8fb; border-color: #1f78e6; }
.prompt { display: flex; gap: 3px; margin-left: 16px; }

/* window showing past the right edge */
.behind { width: 43px; flex: none; display: flex; flex-direction: column; justify-content: flex-end; gap: 1px; color: #fff; }
.behind-head { height: 36px; line-height: 32px; margin-bottom: 16px; background: #5c5c5c; border: solid #777; border-width: 3px 0; box-shadow: inset 0 1px #111, inset 0 -1px #111; }
.behind-row { height: 20px; background: #f0f0f0; }
.behind-row.warm { height: 29px; background: #ece7e4; }
.behind-row.last { height: 5px; background: #c8c8c8; }

/* section editor dialog */
.dialog { position: absolute; left: 281px; right: 1px; top: 129px; display: flex; flex-direction: column; background: #dddddf; border: 1px solid #b4b8be; box-shadow: 0 2px 12px rgba(0,0,0,0.3); }
.titlebar { height: 29px; display: flex; align-items: center; gap: 12px; padding: 0 10px 0 11px; border-bottom: 1px solid #c0c4cb; background: linear-gradient(90deg, #fafafa, #e4e4e4 3%, #e4e4e4 45%, #e4f0f6 54%, #e9f3ec 61%, #e2f0f6 66%, #e2f1f8 72%, #e4e4e4 80%, #e4e4e4 90%, #fafafa 94%, #e6e6e6 97%); }
.titlebar h1 { flex: 1; margin: 0; padding-top: 1px; font-size: 14px; line-height: 20px; font-weight: normal; }
.toolbar { height: 27px; display: flex; align-items: center; background: #fff; }
.toolbar.file { border-right: 1px solid #c0c4cb; }
.toolbar.edit { height: 28px; border-top: 2px solid #c0c4cb; border-bottom: 1px solid #c0c4cb; }
.toolbar button { gap: 4px; padding: 2px 4px 0 5px; height: 24px; }
.toolbar.edit button { padding: 2px 6px 0 5px; }
.toolbar.edit .split { padding-right: 1px; }
.toolbar button:disabled { color: #a5a5a5; }
.split::after { margin-left: 2px; border-top-color: #888; }
.handle { width: 2px; height: 14px; margin: 0 4px; background: repeating-linear-gradient(#000 0 2px, transparent 2px 4px); flex: none; }
.toolbar .handle + button { margin-left: -1px; }
.toolbar .handle:first-child + button { margin-left: 0; }
.sep { width: 1px; height: 18px; margin: 0 3px; background: #d4d6da; }
.toolbar.edit .sep { margin: 0 3px 0 1px; }
.toolbar.edit .sep.thick { width: 2px; height: 25px; background: #c0c4cb; margin: 0 0 0 2px; }

.editor { display: flex; height: 414px; background: #000; }
.drawtools { width: 44px; flex: none; display: flex; flex-direction: column; padding: 7px 0 0 5px; background: #fff; border-right: 1px solid #c0c4cb; }
.handle.flat { width: 26px; height: 2px; margin: 0 0 6px 4px; background: repeating-linear-gradient(90deg, #000 0 2px, transparent 2px 4px); }
.drawtools button { width: 27px; height: 22px; padding-right: 1px; margin-bottom: 5px; border-radius: 3px; position: relative; }
.drawtools .on { background: #c2d9f1; }
.has-drop::after { position: absolute; left: 25px; top: 10px; border-top-color: #888; }
.section-canvas { flex: 1; min-width: 0; width: auto; height: 414px; margin-left: -1px; background: #000; }

.dialog-foot { position: relative; height: 42px; display: flex; align-items: center; padding: 0 20px 0 2px; }
.coords { width: 156px; font-size: 13px; }
.count { width: 66px; }
.toggles { display: flex; gap: 6px; }
.toggles button { width: 25px; height: 25px; border: 1px solid #2f7fe0; border-radius: 3px; background: #dbe8fb; }
.toggles .wide { width: 36px; gap: 6px; }
.hint, .coords, .count { padding-top: 2px; }
.hint { margin-left: 6px; white-space: nowrap; }
.actions { display: flex; gap: 6px; margin: 0 0 5px auto; }
.actions button { width: 80px; height: 26px; padding-top: 1px; background: #fff; border: 1px solid #cfd0d4; border-radius: 3px; }
.actions .primary { background: #2d80e4; border-color: #2d80e4; color: #fff; }
.resizer { position: absolute; right: 3px; bottom: 4px; width: 9px; height: 9px; }
```
